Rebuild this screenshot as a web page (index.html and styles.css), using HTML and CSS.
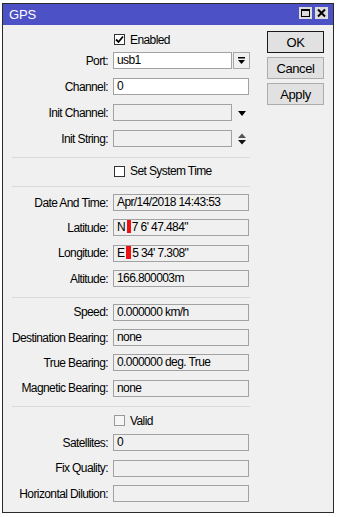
FILE: index.html
```html
<!DOCTYPE html>
<html>
<head>
<meta charset="utf-8">
<link rel="stylesheet" href="styles.css">
</head>
<body>
<div class="window">
  <div class="titlebar">
    <span class="title">GPS</span>
    <div class="tbtns">
      <span class="tbtn"><svg width="13" height="12" viewBox="0 0 13 12"><rect x="2.5" y="2.5" width="8" height="7" fill="none" stroke="#000" stroke-width="1"/><rect x="2" y="2" width="9" height="2" fill="#000"/></svg></span>
      <span class="tbtn"><svg width="13" height="12" viewBox="0 0 13 12"><path d="M3 2.5 L10 9.5 M10 2.5 L3 9.5" stroke="#000" stroke-width="2"/></svg></span>
    </div>
  </div>
  <div class="content">
    <div class="form">
      <div class="row first">
        <span class="label"></span>
        <span class="check"><svg width="9" height="9" viewBox="0 0 9 9"><path d="M1 4.5 L3.5 7 L8 1.5" fill="none" stroke="#000" stroke-width="1.8"/></svg></span>
        <span class="ctext">Enabled</span>
      </div>
      <div class="row after-check">
        <span class="label">Port:</span>
        <span class="field white short">usb1</span>
        <span class="ddbtn"><svg width="9" height="9" viewBox="0 0 9 9"><rect x="1" y="1" width="7" height="1.5" fill="#000"/><path d="M1 4 L8 4 L4.5 8 Z" fill="#000"/></svg></span>
      </div>
      <div class="row g9">
        <span class="label">Channel:</span>
        <span class="field white">0</span>
      </div>
      <div class="row g9">
        <span class="label">Init Channel:</span>
        <span class="field short"></span>
        <span class="ddicon"><svg width="10" height="8" viewBox="0 0 10 8"><path d="M1 2 L9 2 L5 7 Z" fill="#000"/></svg></span>
      </div>
      <div class="row g9">
        <span class="label">Init String:</span>
        <span class="field short"></span>
        <span class="ddicon"><svg width="10" height="14" viewBox="0 0 10 14"><path d="M1 6 L9 6 L5 1.5 Z" fill="#555"/><path d="M1 8 L9 8 L5 12.5 Z" fill="#111"/></svg></span>
      </div>
      <div class="sep s1"></div>
      <div class="row check-row">
        <span class="label"></span>
        <span class="check"></span>
        <span class="ctext">Set System Time</span>
      </div>
      <div class="sep s2"></div>
      <div class="row g7">
        <span class="label">Date And Time:</span>
        <span class="field">Apr/14/2018 14:43:53</span>
      </div>
      <div class="row g8">
        <span class="label">Latitude:</span>
        <span class="field">N <span class="redact"></span>7 6' 47.484"</span>
      </div>
      <div class="row g8">
        <span class="label">Longitude:</span>
        <span class="field">E <span class="redact wide"></span>5 34' 7.308"</span>
      </div>
      <div class="row g8">
        <span class="label">Altitude:</span>
        <span class="field">166.800003m</span>
      </div>
      <div class="sep s3"></div>
      <div class="row g6">
        <span class="label">Speed:</span>
        <span class="field">0.000000 km/h</span>
      </div>
      <div class="row g8">
        <span class="label">Destination Bearing:</span>
        <span class="field">none</span>
      </div>
      <div class="row g8">
        <span class="label">True Bearing:</span>
        <span class="field">0.000000 deg. True</span>
      </div>
      <div class="row g8">
        <span class="label">Magnetic Bearing:</span>
        <span class="field">none</span>
      </div>
      <div class="sep s4"></div>
      <div class="row check-row">
        <span class="label"></span>
        <span class="check disabled"></span>
        <span class="ctext">Valid</span>
      </div>
      <div class="row g5">
        <span class="label">Satellites:</span>
        <span class="field">0</span>
      </div>
      <div class="row g8">
        <span class="label">Fix Quality:</span>
        <span class="field"></span>
      </div>
      <div class="row g8">
        <span class="label">Horizontal Dilution:</span>
        <span class="field"></span>
      </div>
    </div>
    <div class="buttons">
      <div class="btn default">OK</div>
      <div class="btn">Cancel</div>
      <div class="btn">Apply</div>
    </div>
  </div>
</div>
</body>
</html>
```
FILE: styles.css
```css
html, body {
  margin: 0;
  padding: 0;
  background: #ffffff;
}
body {
  width: 337px;
  height: 517px;
  overflow: hidden;
  font-family: "Liberation Sans", Arial, sans-serif;
  font-size: 12px;
  letter-spacing: -0.6px;
  color: #000;
}
.window {
  box-sizing: border-box;
  margin: 3px 0 0 2px;
  width: 332px;
  height: 510px;
  border: 1px solid #2b2b2b;
  background: #f0f0f0;
  display: flex;
  flex-direction: column;
}
.titlebar {
  height: 21px;
  background: #4c51c6;
  display: flex;
  align-items: center;
  justify-content: space-between;
  padding: 0 5px 0 6px;
}
.title {
  color: #ffffff;
  font-size: 13px;
  letter-spacing: -0.2px;
}
.tbtns {
  display: flex;
  gap: 3px;
  margin-top: -3px;
}
.tbtn {
  width: 13px;
  height: 12px;
  background: #dcdcdc;
  display: flex;
}
.content {
  display: grid;
  grid-template-columns: 264px 57px;
  align-items: start;
}
.form {
  display: flex;
  flex-direction: column;
}
.row {
  height: 17px;
  display: flex;
  align-items: center;
}
.row.first { margin-top: 6px; }
.row.after-check { margin-top: 4px; }
.row.g9 { margin-top: 9px; }
.row.g8 { margin-top: 8.4px; }
.row.g7 { margin-top: 7px; }
.row.g6 { margin-top: 6px; }
.row.g5 { margin-top: 5px; }
.row.check-row { margin-top: 5px; }
.label {
  width: 105px;
  margin-right: 5px;
  text-align: right;
  white-space: nowrap;
  flex: none;
}
.field {
  box-sizing: border-box;
  width: 136px;
  height: 17px;
  border: 1px solid #a2a2a2;
  background: #f0f0f0;
  padding: 0 3px;
  line-height: 15px;
  white-space: nowrap;
  overflow: hidden;
  flex: none;
}
.field.white { background: #ffffff; }
.field.short { width: 119px; }
.ddbtn {
  box-sizing: border-box;
  width: 17px;
  height: 17px;
  margin-left: 1px;
  border: 1px solid #a8a8a8;
  background: #f0f0f0;
  display: flex;
  align-items: center;
  justify-content: center;
}
.ddicon {
  width: 17px;
  margin-left: 1px;
  display: flex;
  align-items: center;
  justify-content: center;
}
.check {
  box-sizing: border-box;
  width: 11px;
  height: 11px;
  margin-left: 1px;
  border: 1px solid #333333;
  background: #ffffff;
  display: flex;
  align-items: center;
  justify-content: center;
  flex: none;
}
.check.disabled { border-color: #9a9a9a; background: #f6f6f6; }
.ctext { margin-left: 5px; }
.redact {
  display: inline-block;
  width: 4px;
  height: 13px;
  background: #ee1111;
  vertical-align: -2px;
  margin-left: -1px;
  margin-right: 1px;
}
.redact.wide { width: 5px; }
.sep {
  height: 1px;
  background: #d9d9d9;
  margin-left: 9px;
  width: 238px;
}
.sep.s1 { margin-top: 9.5px; }
.sep.s2 { margin-top: 6.5px; }
.sep.s3 { margin-top: 9.5px; }
.sep.s4 { margin-top: 9.5px; }
.buttons {
  display: flex;
  flex-direction: column;
  gap: 4px;
  margin-top: 6px;
}
.btn {
  box-sizing: border-box;
  height: 22px;
  border: 1px solid #adadad;
  background: #e1e1e1;
  display: flex;
  align-items: center;
  justify-content: center;
  font-size: 13px;
  letter-spacing: -0.4px;
}
.btn.default {
  border: 1px solid #1a1a1a;
  box-shadow: inset 0 0 0 1px #e1e1e1;
}
```
